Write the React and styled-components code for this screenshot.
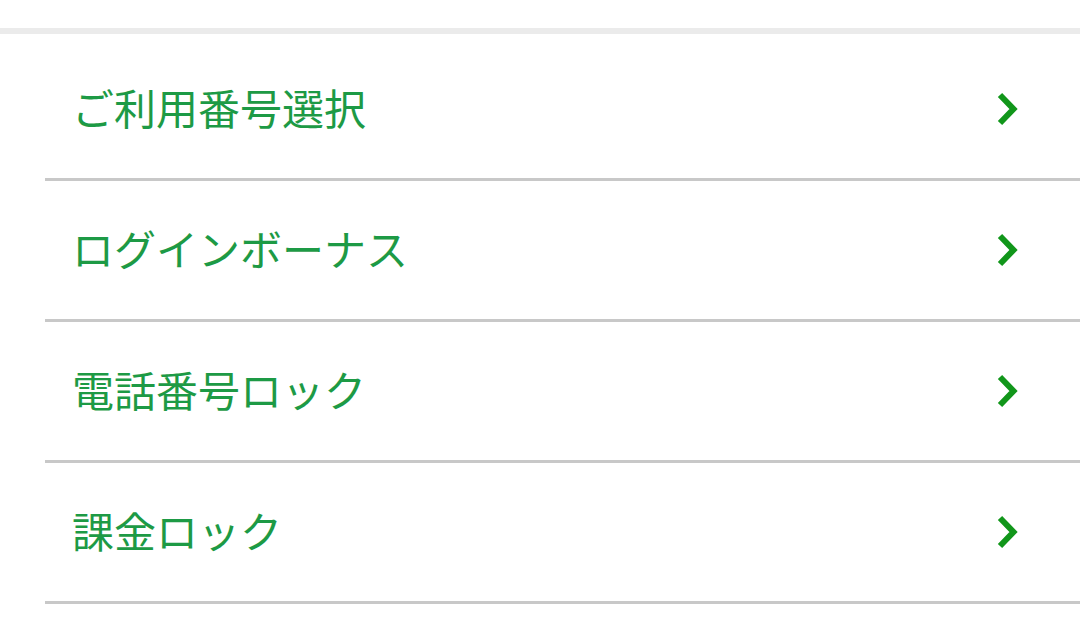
import styled, { createGlobalStyle } from 'styled-components';

const GlobalStyles = createGlobalStyle`
  html, body {
    margin: 0;
    padding: 0;
    background: #fff;
  }
  body {
    font-family: "Noto Sans CJK JP", "Noto Sans", sans-serif;
  }
`;

const items = ['ご利用番号選択', 'ログインボーナス', '電話番号ロック', '課金ロック'];

function Chevron() {
  return (
    <svg width="21" height="34" viewBox="0 0 21 34">
      <polyline
        points="3,3 16.5,17 3,31"
        fill="none"
        stroke="#11961a"
        strokeWidth="6"
        strokeLinejoin="miter"
      />
    </svg>
  );
}

function App() {
  return (
    <Page>
      <GlobalStyles />
      <TopBand />
      <List>
        {items.map(label => (
          <Row key={label}>
            <Label>{label}</Label>
            <Chevron />
          </Row>
        ))}
      </List>
    </Page>
  );
}

const Page = styled.div`
  width: 1080px;
  height: 619px;
  padding-top: 28px;
  box-sizing: border-box;
  overflow: hidden;
`;

const TopBand = styled.div`
  height: 6px;
  background: #ebebeb;
`;

const List = styled.ul`
  list-style: none;
  margin: 0;
  padding: 6px 0 0 45px;
`;

const Row = styled.li`
  display: flex;
  align-items: center;
  justify-content: space-between;
  height: 138px;
  padding: 0 62px 0 27px;
  border-bottom: 3px solid #c8c8c8;
  cursor: pointer;
`;

const Label = styled.span`
  font-size: 42px;
  line-height: 1;
  color: #1d9a45;
  margin-top: -4px;
`;

export default App;
